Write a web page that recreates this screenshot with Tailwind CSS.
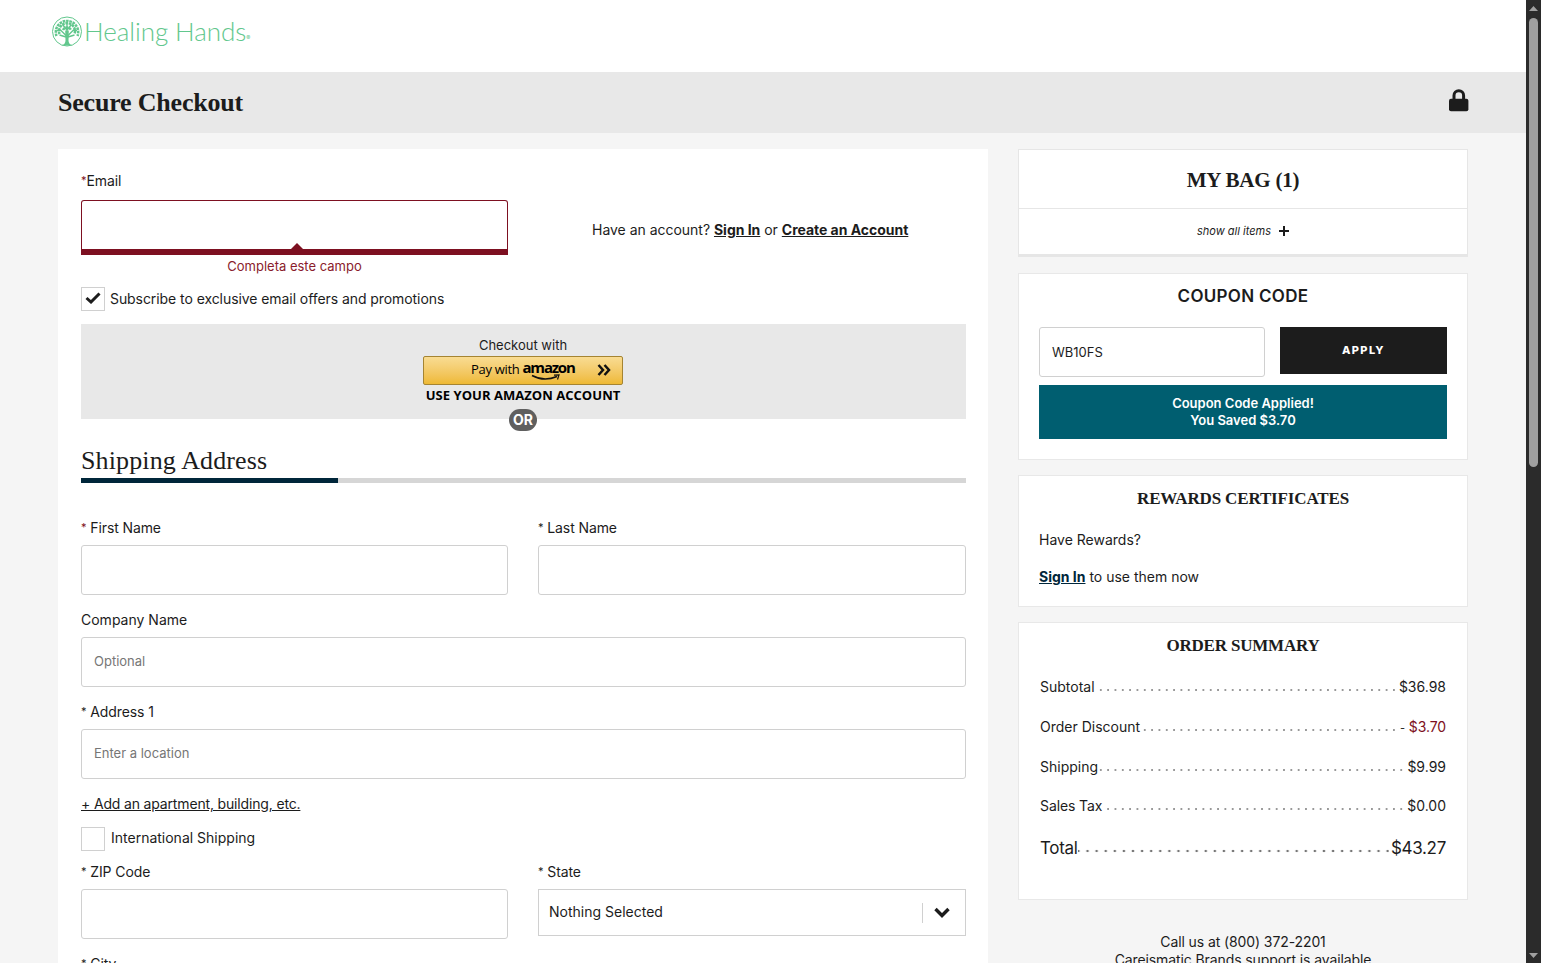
<!DOCTYPE html>
<html lang="en">
<head>
  <meta charset="UTF-8">
  <meta name="viewport" content="width=device-width, initial-scale=1.0">
  <title>Secure Checkout | Healing Hands</title>
  <script src="https://cdn.jsdelivr.net/npm/@tailwindcss/browser@4"></script>
</head>
<body class="h-screen overflow-hidden flex bg-[#f5f5f5] font-['Inter','Liberation_Sans',sans-serif] text-[14px] leading-5 text-[#1c1c1c]">
  <div class="flex-1 h-screen overflow-hidden">
    <header class="h-[72px] bg-white pl-[52px] pt-4">
      <a href="#" class="flex items-start text-[#62c78d]">
        <svg class="w-[31px] h-[31px]" viewBox="0 0 31 31" fill="none" stroke="currentColor">
          <circle cx="15" cy="15.500" r="14.500" stroke-width="1"/>
          <path d="M13.200 14.500L13.500 25Q13 28.500 9.500 29.500H20.500Q17 28.500 16.500 25L16.800 14.500Z" fill="currentColor" stroke="none"/>
          <path d="M15 20V6M14.500 20L8.500 14L5 14.500M15.500 20L21.500 14L25 14.500M15 14L10.500 8.500M15 14L19.500 8.500M14 21L7.500 19M16 21L22.500 19" stroke-width="1.400"/>
          <g stroke-width="2.500" stroke-dasharray="2.600 0.800">
            <path d="M4.500 20A11.200 11.200 0 1 1 25.500 20"/>
            <path d="M7.500 18A8 8 0 1 1 22.500 18"/>
            <path d="M11 14A4.500 4.500 0 0 1 19 14"/>
          </g>
        </svg>
        <span class="ml-px font-['Lato'] font-light text-[26px] leading-[30px] tracking-[-0.05px]">Healing Hands</span>
        <span class="mt-[18px] text-[6px] leading-[8px]">®</span>
      </a>
    </header>

    <div class="h-[61px] bg-[#e8e8e8] pl-[58px] pr-[57px] flex items-center justify-between">
      <h1 class="font-['Liberation_Serif',serif] font-bold text-[26px] leading-8 tracking-[-0.2px]">Secure Checkout</h1>
      <svg class="w-5 h-[23px] -mt-[5px]" viewBox="0 0 20 23">
        <path d="M5 11V6.500a4.800 4.800 0 0 1 9.600 0V11" fill="none" stroke="#1c1c1c" stroke-width="3"/>
        <rect x="0" y="9.800" width="19.400" height="12.500" rx="2" fill="#1c1c1c"/>
      </svg>
    </div>

    <div class="flex items-start pl-[58px] pt-4 gap-[30px]">
      <!-- Checkout form -->
      <main class="w-[930px] h-[900px] bg-white pl-[23px] pr-[22px] pt-[22px]">
        <div class="flex">
          <div class="w-[427px]">
            <label class="block h-5 mb-[9px] tracking-[-0.1px]"><span class="text-[11px] leading-none align-[2px] text-[#7d1021]">*</span>Email</label>
            <div class="relative h-[55px] rounded-t-[3px] border border-b-[6px] border-[#7d1021]">
              <svg class="absolute left-[209px] bottom-0 w-3 h-1.5" viewBox="0 0 12 6"><path d="M0 6L6 0L12 6Z" fill="#7d1021"/></svg>
            </div>
            <p class="text-center text-[13px] leading-5 mt-px mb-px text-[#8a1c2c]">Completa este campo</p>
          </div>
          <p class="ml-[84px] mt-[49px] tracking-[-0.02px]">Have an account? <a href="#" class="font-bold underline">Sign In</a> or <a href="#" class="font-bold underline">Create an Account</a></p>
        </div>
        <label class="flex items-center h-6 mt-2.5">
          <span class="w-6 h-6 border border-[#d0d0d0] flex items-center justify-center">
            <svg class="w-4 h-3 -mt-0.5" viewBox="0 0 16 12"><path d="M1.500 6L6 10L14.500 1.500" fill="none" stroke="#1c1c1c" stroke-width="3"/></svg>
          </span>
          <span class="ml-[5px] tracking-[-0.07px]">Subscribe to exclusive email offers and promotions</span>
        </label>

        <section class="relative mt-[13px] h-[95px] bg-[#e8e8e8] flex flex-col items-center pr-px">
          <p class="mt-[11px] mb-px leading-5 text-[13px]">Checkout with</p>
          <button class="w-[200px] h-[29px] rounded-[2px] border border-[#a58432] bg-linear-to-b from-[#f9dc92] to-[#eeb933] flex items-center pl-[47px] text-[13px] text-black font-['Open_Sans'] font-medium">
            <span class="tracking-[-0.3px] -mt-1">Pay with</span>
            <span class="relative ml-[3px] -mt-[7px] font-bold text-[15px] tracking-[-1.2px]">amazon
              <svg class="absolute left-2 top-4 w-[30px] h-2" viewBox="0 0 30 8" fill="none" stroke="#111"><path d="M1 2.500Q13 9 26 3.500" stroke-width="1.500"/><path d="M23 2.200L28 2L26.500 6.500" stroke-width="1.200"/></svg>
            </span>
            <svg class="ml-[22px] w-[14px] h-3 -mt-px" viewBox="0 0 14 12"><path d="M1.500 1L6 6L1.500 11M7.500 1L12 6L7.500 11" fill="none" stroke="#111" stroke-width="2.500"/></svg>
          </button>
          <p class="font-['Open_Sans'] font-bold text-[13px] text-black leading-5 tracking-[0.04px] whitespace-nowrap">USE YOUR AMAZON ACCOUNT</p>
          <span class="absolute top-[85px] w-7 h-[22px] rounded-full bg-[#5f5f5f] text-white font-bold text-[14px] leading-[22px] text-center">OR</span>
        </section>

        <h2 class="mt-[25px] mb-px font-['Liberation_Serif',serif] text-[26px] leading-[33px] tracking-[0.13px]">Shipping Address</h2>
        <div class="h-[5px] bg-[#d6d6d6]"><div class="h-[5px] w-[257px] bg-[#00263a]"></div></div>

        <div class="grid grid-cols-[427px_428px] gap-x-[30px] mt-[35px]">
          <div>
            <label class="block h-5 mb-[7px] tracking-[-0.1px]"><span class="text-[11px] leading-none align-[2px] text-[#7d1021]">*</span> First Name</label>
            <div class="h-[50px] rounded-[3px] border border-[#d0d0d0]"></div>
          </div>
          <div>
            <label class="block h-5 mb-[7px] tracking-[-0.1px]"><span class="text-[11px] leading-none align-[2px]">*</span> Last Name</label>
            <div class="h-[50px] rounded-[3px] border border-[#d0d0d0]"></div>
          </div>
        </div>
        <label class="block h-5 mt-[15px] mb-[7px]">Company Name</label>
        <div class="h-[50px] rounded-[3px] border border-[#d0d0d0] px-3 text-[13px] leading-[47px] text-[#767676]">Optional</div>
        <label class="block h-5 mt-[15px] mb-[7px] tracking-[-0.1px]"><span class="text-[11px] leading-none align-[2px]">*</span> Address 1</label>
        <div class="h-[50px] rounded-[3px] border border-[#d0d0d0] px-3 text-[13px] leading-[47px] text-[#767676]">Enter a location</div>
        <a href="#" class="block h-5 mt-[15px] underline tracking-[-0.16px]">+ Add an apartment, building, etc.</a>
        <label class="flex items-center h-6 mt-[13px]">
          <span class="w-6 h-6 border border-[#d0d0d0]"></span>
          <span class="ml-1.5 -mt-0.5">International Shipping</span>
        </label>
        <div class="grid grid-cols-[427px_428px] gap-x-[30px] mt-[11px]">
          <div>
            <label class="block h-5 mb-[7px] tracking-[-0.1px]"><span class="text-[11px] leading-none align-[2px]">*</span> ZIP Code</label>
            <div class="h-[50px] rounded-[3px] border border-[#d0d0d0]"></div>
          </div>
          <div>
            <label class="block h-5 mb-[7px] tracking-[-0.1px]"><span class="text-[11px] leading-none align-[2px]">*</span> State</label>
            <div class="h-[47px] border border-[#d0d0d0] pl-2.5 pr-[15px] flex items-center">
              <span class="flex-1 -mt-0.5">Nothing Selected</span>
              <span class="w-px h-5 bg-[#d0d0d0]"></span>
              <svg class="ml-[11px] w-4 h-[11px]" viewBox="0 0 16 11"><path d="M1.500 2L8 8.500L14.500 2" fill="none" stroke="#1c1c1c" stroke-width="3.400"/></svg>
            </div>
          </div>
        </div>
        <label class="block mt-[15px] tracking-[-0.1px]"><span class="text-[11px] leading-none align-[2px]">*</span> City</label>
      </main>

      <!-- Bag and totals -->
      <aside class="w-[450px]">
        <section class="h-[108px] bg-white border border-b-[3px] border-[#e6e6e6]">
          <h2 class="h-[59px] border-b border-[#e6e6e6] text-center font-['Liberation_Serif',serif] font-bold text-[21px] leading-[60px] tracking-[-0.2px]">MY BAG (1)</h2>
          <a href="#" class="h-[44px] flex items-center justify-center gap-2 italic text-[11px]">show all items
            <svg class="w-2.5 h-2.5" viewBox="0 0 10 10"><path d="M5 0V10M0 5H10" stroke="#1c1c1c" stroke-width="2"/></svg>
          </a>
        </section>

        <section class="mt-4 h-[187px] bg-white border border-[#e8e8e8] px-5 pt-3">
          <h2 class="text-center font-semibold text-[17px] leading-5 tracking-[0.3px]">COUPON CODE</h2>
          <div class="flex gap-[15px] mt-[21px]">
            <div class="w-[226px] h-[50px] rounded-[3px] border border-[#d0d0d0] px-3 text-[13px] leading-[48px]">WB10FS</div>
            <button class="flex-1 h-[47px] bg-[#1c1c1c] text-white font-extrabold text-[11px] tracking-[1.4px] pb-0.5">APPLY</button>
          </div>
          <div class="mt-2 h-[54px] bg-[#005e70] text-white text-center font-semibold text-[13px] leading-[17px] pt-2.5">Coupon Code Applied!<br>You Saved $3.70</div>
        </section>

        <section class="mt-[15px] h-[132px] bg-white border border-[#e8e8e8] px-5 pt-[13px]">
          <h2 class="text-center font-['Liberation_Serif',serif] font-bold text-[17px] leading-5 tracking-[-0.15px]">REWARDS CERTIFICATES</h2>
          <p class="mt-[21px]">Have Rewards?</p>
          <p class="mt-[17px]"><a href="#" class="font-bold underline text-[#00263a]">Sign In</a> to use them now</p>
        </section>

        <section class="mt-[15px] h-[278px] bg-white border border-[#e8e8e8] px-[21px] pt-[13px]">
          <h2 class="text-center font-['Liberation_Serif',serif] font-bold text-[17px] leading-5 tracking-[-0.2px]">ORDER SUMMARY</h2>
          <div class="mt-[21px] h-5 flex justify-between bg-[radial-gradient(circle,#999_0.7px,transparent_1.3px)] bg-[length:7.33px_4px] bg-[position:-1.500px_11px] bg-repeat-x">
            <span class="bg-white pr-0.5">Subtotal</span><span class="bg-white pl-1">$36.98</span>
          </div>
          <div class="mt-5 h-5 flex justify-between bg-[radial-gradient(circle,#999_0.7px,transparent_1.3px)] bg-[length:7.33px_4px] bg-[position:-1.500px_11px] bg-repeat-x">
            <span class="bg-white pr-px">Order Discount</span><span class="bg-white text-[#7d1021] tracking-[-0.1px]"><span class="text-[11px] leading-none text-[#1c1c1c]">-</span> $3.70</span>
          </div>
          <div class="mt-5 h-5 flex justify-between bg-[radial-gradient(circle,#999_0.7px,transparent_1.3px)] bg-[length:7.33px_4px] bg-[position:-1.500px_11px] bg-repeat-x">
            <span class="bg-white">Shipping</span><span class="bg-white pl-1">$9.99</span>
          </div>
          <div class="mt-[19px] h-5 flex justify-between bg-[radial-gradient(circle,#999_0.7px,transparent_1.3px)] bg-[length:7.33px_4px] bg-[position:-1.500px_11px] bg-repeat-x">
            <span class="bg-white pr-0.5 tracking-[-0.1px]">Sales Tax</span><span class="bg-white pl-1">$0.00</span>
          </div>
          <div class="mt-[22px] h-5 flex justify-between text-[17px] leading-5 bg-[radial-gradient(circle,#777_1px,transparent_1.6px)] bg-[length:9.1px_4px] bg-[position:-2.500px_11px] bg-repeat-x">
            <span class="bg-white tracking-[-0.3px]">Total</span><span class="bg-white pl-0.5 tracking-[-0.3px]">$43.27</span>
          </div>
        </section>

        <p class="mt-[33px] text-center leading-[18px] tracking-[-0.1px]">Call us at (800) 372-2201<br>Careismatic Brands support is available</p>
      </aside>
    </div>
  </div>

  <!-- Dark scrollbar -->
  <div class="w-[15px] h-screen bg-[#2b2b2b] flex flex-col items-center pt-1.5 pb-[5px]">
    <svg class="w-[9px] h-[5px]" viewBox="0 0 9 5"><path d="M4.500 0L9 5H0Z" fill="#a0a0a0"/></svg>
    <div class="mt-[7px] w-[9px] h-[449px] rounded-full bg-[#9f9f9f]"></div>
    <svg class="mt-auto w-[9px] h-[5px]" viewBox="0 0 9 5"><path d="M0 0H9L4.500 5Z" fill="#a0a0a0"/></svg>
  </div>
</body>
</html>
